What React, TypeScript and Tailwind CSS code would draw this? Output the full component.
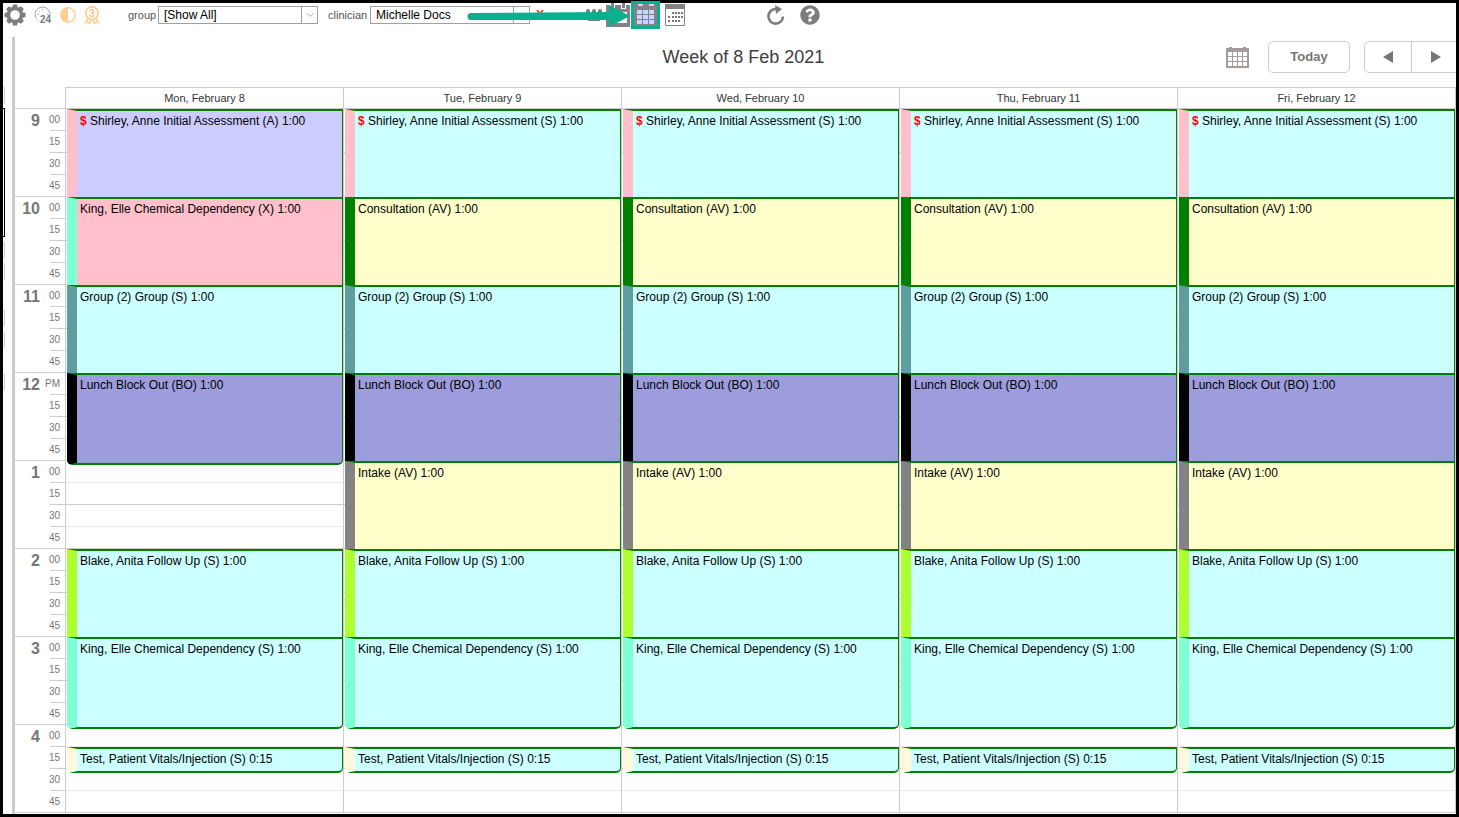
import { useState } from "react";
import { FaQuestionCircle } from "react-icons/fa";

type Appointment = {
    title: string;
    start: number; // quarter hours from 9:00
    length: number; // quarter hours
    bg: string;
    bar: string;
    unpaid?: boolean;
};

const hours = [
    { label: "9", first: "00" },
    { label: "10", first: "00" },
    { label: "11", first: "00" },
    { label: "12", first: "PM" },
    { label: "1", first: "00" },
    { label: "2", first: "00" },
    { label: "3", first: "00" },
    { label: "4", first: "00" },
];

const scheduled = "bg-[#ccffff]";
const available = "bg-[#ffffcc]";

const group: Appointment = { title: "Group (2) Group (S) 1:00", start: 8, length: 4, bg: scheduled, bar: "border-l-[#5f9ea0]" };
const lunch: Appointment = { title: "Lunch Block Out (BO) 1:00", start: 12, length: 4, bg: "bg-[#9d9ddd]", bar: "border-l-black" };

const afternoon: Appointment[] = [
    { title: "Blake, Anita Follow Up (S) 1:00", start: 20, length: 4, bg: scheduled, bar: "border-l-[#adff2f]" },
    { title: "King, Elle Chemical Dependency (S) 1:00", start: 24, length: 4, bg: scheduled, bar: "border-l-[#7fffd4]" },
    { title: "Test, Patient Vitals/Injection (S) 0:15", start: 29, length: 1, bg: scheduled, bar: "border-l-[#fff8dc]" },
];

const monday: Appointment[] = [
    { title: "Shirley, Anne Initial Assessment (A) 1:00", start: 0, length: 4, bg: "bg-[#ccccff]", bar: "border-l-[#ffc0cb]", unpaid: true },
    { title: "King, Elle Chemical Dependency (X) 1:00", start: 4, length: 4, bg: "bg-[#ffc0cb]", bar: "border-l-[#7fffd4]" },
    group,
    lunch,
    ...afternoon,
];

const regularDay: Appointment[] = [
    { title: "Shirley, Anne Initial Assessment (S) 1:00", start: 0, length: 4, bg: scheduled, bar: "border-l-[#ffc0cb]", unpaid: true },
    { title: "Consultation (AV) 1:00", start: 4, length: 4, bg: available, bar: "border-l-[#008000]" },
    group,
    lunch,
    { title: "Intake (AV) 1:00", start: 16, length: 4, bg: available, bar: "border-l-[#848284]" },
    ...afternoon,
];

const days = [
    { name: "Mon, February 8", appointments: monday },
    { name: "Tue, February 9", appointments: regularDay },
    { name: "Wed, February 10", appointments: regularDay },
    { name: "Thu, February 11", appointments: regularDay },
    { name: "Fri, February 12", appointments: regularDay },
];

const slots = Array.from({ length: 32 }, (_, i) => i);

const GearIcon = () => (
    <svg width="22" height="22" viewBox="0 0 22 22" fill="#7d7d80">
        {[0, 45, 90, 135].map((angle) => (
            <path key={angle} d="M9 0.5h4l1 4v13l-1 4h-4l-1-4v-13z" transform={`rotate(${angle} 11 11)`} />
        ))}
        <circle cx="11" cy="11" r="8.3" />
        <circle cx="11" cy="11" r="4.8" fill="#fff" />
    </svg>
);

const ClockIcon = () => (
    <svg width="18" height="18" viewBox="0 0 18 18">
        <path d="M16 9.5A7.5 7.5 0 1 0 1.500 11" fill="none" stroke="#a6a6a6" />
        <path d="M1.500 11a7.500 7.500 0 0 0 4 4.500" fill="none" stroke="#b8b8b8" strokeDasharray="1.500 1" />
        <path d="M8.500 3v1.500M3 8.500h1.500M13 8.500h1.500M5 5l1 1" stroke="#b0b0b0" />
        <text x="6" y="17" fontSize="10" fontWeight="bold" fill="#777" fontFamily="Liberation Sans, sans-serif">24</text>
    </svg>
);

const ContrastIcon = () => (
    <svg width="16" height="16" viewBox="0 0 16 16">
        <circle cx="8" cy="8" r="7.2" fill="#fff" stroke="#ffcd91" strokeWidth="1.5" />
        <path d="M8 .5a7.500 7.500 0 0 0 0 15z" fill="#ffcd91" />
    </svg>
);

const MedalIcon = () => (
    <svg width="16" height="18" viewBox="0 0 16 18" fill="none" stroke="#ffcd91">
        <path d="M4 12.500L1.500 16.500l2.500-.5 1.500 1.500 2-4.500M12 12.500l2.500 4-2.500-.5-1.500 1.500-2-4.500" strokeWidth="1.600" />
        <circle cx="8" cy="7" r="6.300" strokeWidth="1.700" fill="#fff" />
        <text x="5" y="10.500" fontSize="10" fontWeight="bold" fill="#ffc27a" stroke="none" fontFamily="Liberation Sans, sans-serif">3</text>
    </svg>
);

const PeopleIcon = () => (
    <svg width="18" height="14" viewBox="0 0 18 14" fill="#7d7d80">
        <rect x="1" y="1" width="4" height="6" rx="2" />
        <rect x="7" y="1" width="4" height="6" rx="2" />
        <rect x="13" y="1" width="4" height="6" rx="2" />
        <path d="M0 5h18v6h-3v2H3v-2H0z" />
    </svg>
);

const DayIcon = () => (
    <svg width="24" height="24" viewBox="0 0 24 24">
        <path d="M0 2h24v22H0z" fill="#848284" />
        <path d="M3 9h18v11H3z" fill="#fff" />
        <path d="M4 0h5v6H4zM15 0h5v6h-5z" fill="#fff" />
        <path d="M5 0h3v5H5zM16 0h3v5h-3z" fill="#848284" />
    </svg>
);

const WeekIcon = () => (
    <svg width="23" height="22" viewBox="0 0 23 22">
        <path d="M0 0h23v22H0z" fill="#848284" />
        <path d="M4 0h5v2H4zM15 0h5v2h-5z" fill="#c6d7ff" />
        {[6, 11, 16].map((y) =>
            [3, 9, 15].map((x) => <rect key={`${x}-${y}`} x={x} y={y} width="5" height="4" fill="#c6d7ff" />)
        )}
    </svg>
);

const MonthIcon = () => (
    <svg width="20" height="22" viewBox="0 0 20 22">
        <path d="M.5.500h19v21H.5z" fill="#fff" stroke="#848284" />
        <path d="M0 0h20v5H0z" fill="#848284" />
        {[7, 10, 13, 16].map((x) => <rect key={x} x={x} y="8" width="2" height="2" fill="#777" />)}
        {[3, 7, 10, 13, 16].map((x) => <rect key={x} x={x} y="12" width="2" height="2" fill="#777" />)}
        {[3, 7, 10, 13].map((x) => <rect key={x} x={x} y="16" width="2" height="2" fill="#777" />)}
    </svg>
);

const RefreshIcon = () => (
    <svg width="20" height="20" viewBox="0 0 20 20">
        <path d="M17 11.500A7.300 7.300 0 1 1 10 4" fill="none" stroke="#7d7d80" strokeWidth="2.600" />
        <path d="M9 0l7 4-6 5z" fill="#7d7d80" />
    </svg>
);

const DatePickerIcon = () => (
    <svg width="23" height="21" viewBox="0 0 23 21">
        <path d="M0 1h3V0h3v1h11V0h3v1h3v20H0z" fill="#a39c9b" />
        {[5, 10, 15].map((y) =>
            [2, 7, 12, 17].map((x) => <rect key={`${x}-${y}`} x={x} y={y} width="4" height="4" fill="#fff" />)
        )}
    </svg>
);

const FilterSelect = ({ id, value, options, onChange }: { id: string; value: string; options: string[]; onChange: (v: string) => void }) => (
    <div className="relative w-[160px]">
        <select
            id={id}
            value={value}
            onChange={(e) => onChange(e.target.value)}
            className="block h-[18px] w-full appearance-none border border-[#a0a0a0] bg-white pl-[5px] text-[12px] leading-4 text-black outline-none"
        >
            {options.map((option) => (
                <option key={option}>{option}</option>
            ))}
        </select>
        <span className="pointer-events-none absolute inset-y-0 right-0 flex w-[17px] items-center justify-center border-l border-[#a0a0a0]">
            <svg width="7" height="5" viewBox="0 0 7 5" fill="none" stroke="#b0b0b0">
                <path d="M.5.500l3 3 3-3" />
            </svg>
        </span>
    </div>
);

// Edges of the collapsed side panel
const SidePanel = () => (
    <div className="w-[9px] shrink-0 pt-[49px]">
        <div className="h-[18px] w-[2px] rounded-r-sm border-r border-[#ccc]" />
        <div className="mt-1 h-[129px] w-[2px] border-y border-r border-black" />
        <div className="mt-1 h-[18px] w-[2px] rounded-r-sm border-r border-[#ccc]" />
        <div className="mt-1 h-[18px] w-[2px] rounded-r-sm border-r border-[#ccc]" />
        <div className="mt-7 h-[18px] w-[2px] rounded-r-sm border-r border-[#ccc]" />
        <div className="mt-1 h-[18px] w-[2px] rounded-r-sm border-r border-[#ccc]" />
        <div className="mt-6 h-[18px] w-[2px] rounded-r-sm border-r border-[#ccc]" />
    </div>
);

const TimeColumn = () => (
    <div className="w-[50px] shrink-0 pt-[21px] text-[#767676]">
        {hours.map((hour) => (
            <div key={hour.label} className="flex h-[88px] border-t border-[#ccc]">
                <p className="w-[25px] shrink-0 text-right text-[16px] font-bold leading-6">{hour.label}</p>
                <div className="ml-[10px] w-[15px] shrink-0 text-[10px] leading-[21px]">
                    {[hour.first, "15", "30", "45"].map((minute, i) => (
                        <p key={minute} className={`flex justify-end pr-[5px] ${i > 0 ? "h-[22px] border-t border-[#ccc]" : "h-[21px]"}`}>
                            {minute}
                        </p>
                    ))}
                </div>
            </div>
        ))}
        <div className="border-t border-[#ccc]" />
    </div>
);

const DayColumn = ({ name, appointments }: { name: string; appointments: Appointment[] }) => (
    <section className="min-w-0 flex-1 border-l border-[#ccc]">
        <h2 className="h-[21px] border-t border-[#ccc] text-center text-[11px] leading-[21px] text-[#333]">{name}</h2>
        <div className="grid auto-rows-[22px] grid-cols-1 border-b border-[#ccc]">
            {slots.map((slot) => (
                <div
                    key={slot}
                    className={`col-start-1 border-t ${slot % 2 === 0 ? "border-[#ccc]" : "border-[#eaeaea]"}`}
                    style={{ gridRow: slot + 1 }}
                />
            ))}
            {appointments.map((item) => (
                <article
                    key={item.start}
                    className={`col-start-1 -mb-[5px] ml-px mt-px overflow-hidden whitespace-nowrap rounded-b-[5px] border-y-2 border-l-[10px] border-r border-y-[#008000] border-r-[#008000] pl-[3px] text-[12px] leading-5 text-black ${item.bg} ${item.bar}`}
                    style={{ gridRow: `${item.start + 1} / span ${item.length}` }}
                >
                    {item.unpaid && <b className="text-[#ff0000]">$ </b>}
                    {item.title}
                </article>
            ))}
        </div>
    </section>
);

export default function App() {
    const [groupName, setGroupName] = useState("[Show All]");
    const [clinician, setClinician] = useState("Michelle Docs");

    return (
        <div className="min-h-screen border-[3px] border-black bg-white font-['Liberation_Sans',Arial,sans-serif]">
            <header className="mb-[10px] flex h-6 items-center pl-px text-[11px] text-[#555]">
                <div className="flex items-center gap-2">
                    <button aria-label="Settings"><GearIcon /></button>
                    <button aria-label="24 hours"><ClockIcon /></button>
                    <button aria-label="Contrast"><ContrastIcon /></button>
                    <button aria-label="Awards"><MedalIcon /></button>
                </div>
                <label htmlFor="group" className="ml-7 w-[30px]">group</label>
                <FilterSelect id="group" value={groupName} options={["[Show All]"]} onChange={setGroupName} />
                <div className="relative ml-[10px] flex items-center">
                    <label htmlFor="clinician" className="w-[42px]">clinician</label>
                    <FilterSelect id="clinician" value={clinician} options={["Michelle Docs"]} onChange={setClinician} />
                    <button aria-label="Clear clinician" className="ml-[5px] w-[10px] text-[12px] font-bold leading-4 text-[#ff2000]">X</button>
                    <button aria-label="Clinicians" className="ml-10"><PeopleIcon /></button>
                    <button aria-label="Day view" className="ml-[3px]"><DayIcon /></button>
                    <button aria-label="Week view" className="ml-px border-[3px] border-[#09b08f]"><WeekIcon /></button>
                    <svg className="pointer-events-none absolute left-[139px] top-1/2 -translate-y-1/2" width="164" height="24" viewBox="0 0 164 24" fill="#09b08f">
                        <path d="M4 10L142 9V2l21 11-21 11v-7L4 17a3.500 3.500 0 0 1 0-7z" />
                    </svg>
                </div>
                <button aria-label="Month view" className="ml-[5px]"><MonthIcon /></button>
                <button aria-label="Refresh" className="ml-[81px]"><RefreshIcon /></button>
                <button aria-label="Help" className="ml-[14px]"><FaQuestionCircle size={20} color="#7d7d80" /></button>
            </header>

            <main className="flex">
                <SidePanel />
                <div className="min-w-0 flex-1 border-l-[3px] border-[#ccc] pb-px">
                    <div className="flex h-[50px] items-center overflow-hidden pb-[10px] pl-4">
                        <div className="flex-1" />
                        <h1 className="text-[18px] text-[#3d3d3d]">Week of 8 Feb 2021</h1>
                        <div className="flex flex-1 items-center justify-end">
                            <button aria-label="Pick a date"><DatePickerIcon /></button>
                            <button className="ml-[19px] h-8 w-[82px] rounded-[5px] border border-[#ccc] text-[13px] font-bold text-[#767676]">Today</button>
                            <div className="-mr-1 ml-[14px] flex h-8 rounded-[5px] border border-[#ccc]">
                                <button aria-label="Previous week" className="flex w-[47px] items-center justify-center border-r border-[#ccc]">
                                    <svg width="10" height="12" viewBox="0 0 10 12" fill="#767676"><path d="M10 0v12L0 6z" /></svg>
                                </button>
                                <button aria-label="Next week" className="flex w-[47px] items-center justify-center">
                                    <svg width="10" height="12" viewBox="0 0 10 12" fill="#767676"><path d="M0 0v12l10-6z" /></svg>
                                </button>
                            </div>
                        </div>
                    </div>
                    <div className="flex border-r border-[#ccc]">
                        <TimeColumn />
                        {days.map((day) => (
                            <DayColumn key={day.name} name={day.name} appointments={day.appointments} />
                        ))}
                    </div>
                </div>
            </main>
        </div>
    );
}
